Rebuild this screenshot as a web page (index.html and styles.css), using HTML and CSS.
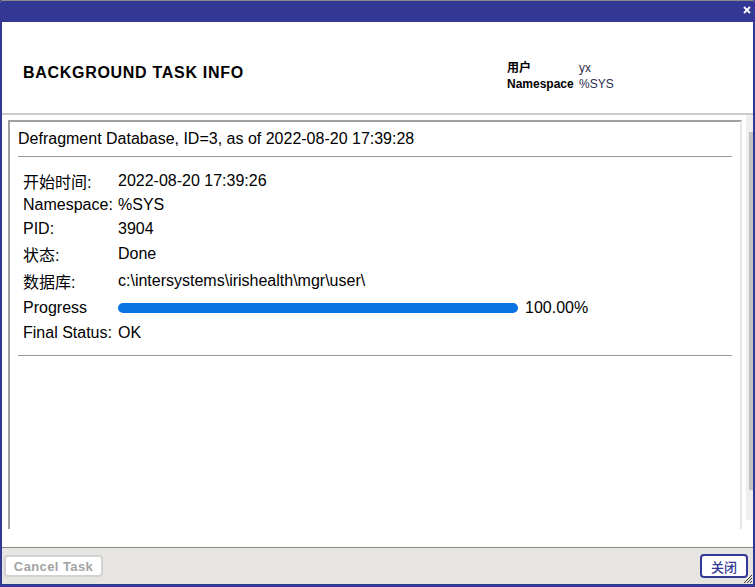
FILE: index.html
```html
<!DOCTYPE html>
<html lang="zh">
<head>
    <meta charset="UTF-8">
    <title>Background Task Info</title>
    <link rel="stylesheet" href="styles.css">
</head>
<body>
    <div class="dialog">
        <div class="titlebar">
            <svg class="close-x" width="8" height="8" viewBox="0 0 8 8">
                <path d="M1 1L7 7M7 1L1 7" stroke="#fff" stroke-width="1.8"/>
            </svg>
        </div>

        <div class="header">
            <h2 class="page-title">BACKGROUND TASK INFO</h2>
            <div class="user-info">
                <span class="info-label">用户</span><span class="info-value">yx</span>
                <span class="info-label">Namespace</span><span class="info-value">%SYS</span>
            </div>
        </div>

        <div class="content">
            <div class="pane">
                <div class="task-box">
                    <div class="task-title">Defragment Database, ID=3, as of 2022-08-20 17:39:28</div>
                    <div class="rule"></div>
                    <div class="task-table">
                        <div class="row r1"><span class="label">开始时间:</span><span>2022-08-20 17:39:26</span></div>
                        <div class="row r2"><span class="label">Namespace:</span><span>%SYS</span></div>
                        <div class="row r3"><span class="label">PID:</span><span>3904</span></div>
                        <div class="row r4"><span class="label">状态:</span><span>Done</span></div>
                        <div class="row r5"><span class="label">数据库:</span><span>c:\intersystems\irishealth\mgr\user\</span></div>
                        <div class="row r6">
                            <span class="label">Progress</span>
                            <span class="progress">
                                <span class="bar"><span class="bar-fill" style="width: 100%"></span></span>
                                <span class="pct">100.00%</span>
                            </span>
                        </div>
                        <div class="row r7"><span class="label">Final Status:</span><span>OK</span></div>
                    </div>
                    <div class="rule rule-bottom"></div>
                </div>
            </div>
            <div class="scrollbar">
                <div class="thumb"></div>
            </div>
        </div>

        <div class="footer">
            <button class="btn-cancel" disabled>Cancel Task</button>
            <button class="btn-close">关闭</button>
        </div>

        <svg class="grip" width="12" height="12" viewBox="0 0 12 12">
            <path d="M11 3L3 11M11 6L6 11M11 9L9 11" stroke="#333" stroke-width="1"/>
        </svg>
    </div>
</body>
</html>
```

FILE: styles.css
```css
body {
    margin: 0;
    font-family: "Liberation Sans", Arial, "Noto Sans CJK SC", sans-serif;
    color: #000;
    background-color: #fff;
}

.dialog {
    position: relative;
    width: 755px;
    height: 587px;
    box-sizing: border-box;
    border: solid #333894;
    border-width: 0 2px 3px 2px;
    display: flex;
    flex-direction: column;
    background-color: #fff;
}

.titlebar {
    flex: none;
    height: 22px;
    box-sizing: border-box;
    margin: 0 -2px;
    border-top: 1px solid #8a8a8a;
    border-radius: 3px 3px 0 0;
    background-color: #333894;
    display: flex;
    justify-content: flex-end;
    align-items: flex-start;
    padding: 5px 4px 0 0;
}

.header {
    flex: none;
    height: 93px;
    box-sizing: border-box;
    border-bottom: 2px solid #cccccc;
    display: flex;
    align-items: flex-start;
}

.page-title {
    margin: 41px 0 0 21px;
    font-size: 16px;
    line-height: 19px;
    font-weight: bold;
    letter-spacing: 0.7px;
}

.user-info {
    margin: 38px 74px 0 auto;
    display: grid;
    grid-template-columns: 72px 100px;
    font-size: 12px;
    line-height: 16px;
}

.info-label {
    font-weight: bold;
}

.info-value {
    color: #2c2c4c;
}

.content {
    flex: none;
    height: 432px;
    display: flex;
}

.pane {
    flex: 1;
    padding: 5px 4px 0 6px;
}

.task-box {
    height: 409px;
    box-sizing: border-box;
    border-style: solid;
    border-width: 2px 2px 0 2px;
    border-color: #a0a0a0 #e6e6e6 #e6e6e6 #a0a0a0;
    padding: 0 8px;
}

.task-title {
    margin-top: 8px;
    font-size: 16px;
    line-height: 18px;
}

.rule {
    margin-top: 8px;
    height: 1px;
    background-color: #9a9a9a;
}

.task-table {
    margin: 12px 0 0 5px;
    font-size: 16px;
}

.row {
    display: grid;
    grid-template-columns: 95px 1fr;
    align-items: center;
    height: 24px;
}

.r4 { height: 26px; }
.r5 { height: 27px; }
.r6 { height: 27px; }

.progress {
    display: flex;
    align-items: center;
    gap: 7px;
}

.bar {
    width: 400px;
    height: 10px;
    border-radius: 5px;
    background-color: #e0e0e0;
    overflow: hidden;
}

.bar-fill {
    display: block;
    height: 100%;
    background-color: #0b74e5;
}

.rule-bottom {
    margin-top: 10px;
}

.scrollbar {
    flex: none;
    width: 7px;
    height: 405px;
    background-color: #efefef;
}

.thumb {
    margin: 17px 0 0 3px;
    height: 358px;
    background-color: #c3c3c3;
}

.footer {
    flex: none;
    height: 37px;
    box-sizing: border-box;
    border-top: 1px solid #888;
    background-color: #e7e5e1;
    display: flex;
    justify-content: space-between;
    align-items: center;
    padding: 0 5px 0 2px;
}

.btn-cancel {
    width: 99px;
    height: 22px;
    padding: 0;
    border: 2px solid #d2d2d2;
    border-radius: 4px;
    background-color: #fff;
    color: #a3a3a3;
    font-family: "Liberation Sans", Arial, sans-serif;
    font-size: 13px;
    font-weight: bold;
    letter-spacing: 0.4px;
}

.btn-close {
    width: 48px;
    height: 24px;
    padding: 0;
    border: 2px solid #333894;
    border-radius: 4px;
    background-color: #fff;
    color: #333894;
    font-family: "Noto Sans CJK SC", sans-serif;
    font-size: 13px;
    font-weight: 500;
    cursor: pointer;
}

.grip {
    position: absolute;
    right: 0;
    bottom: 0;
}
```
